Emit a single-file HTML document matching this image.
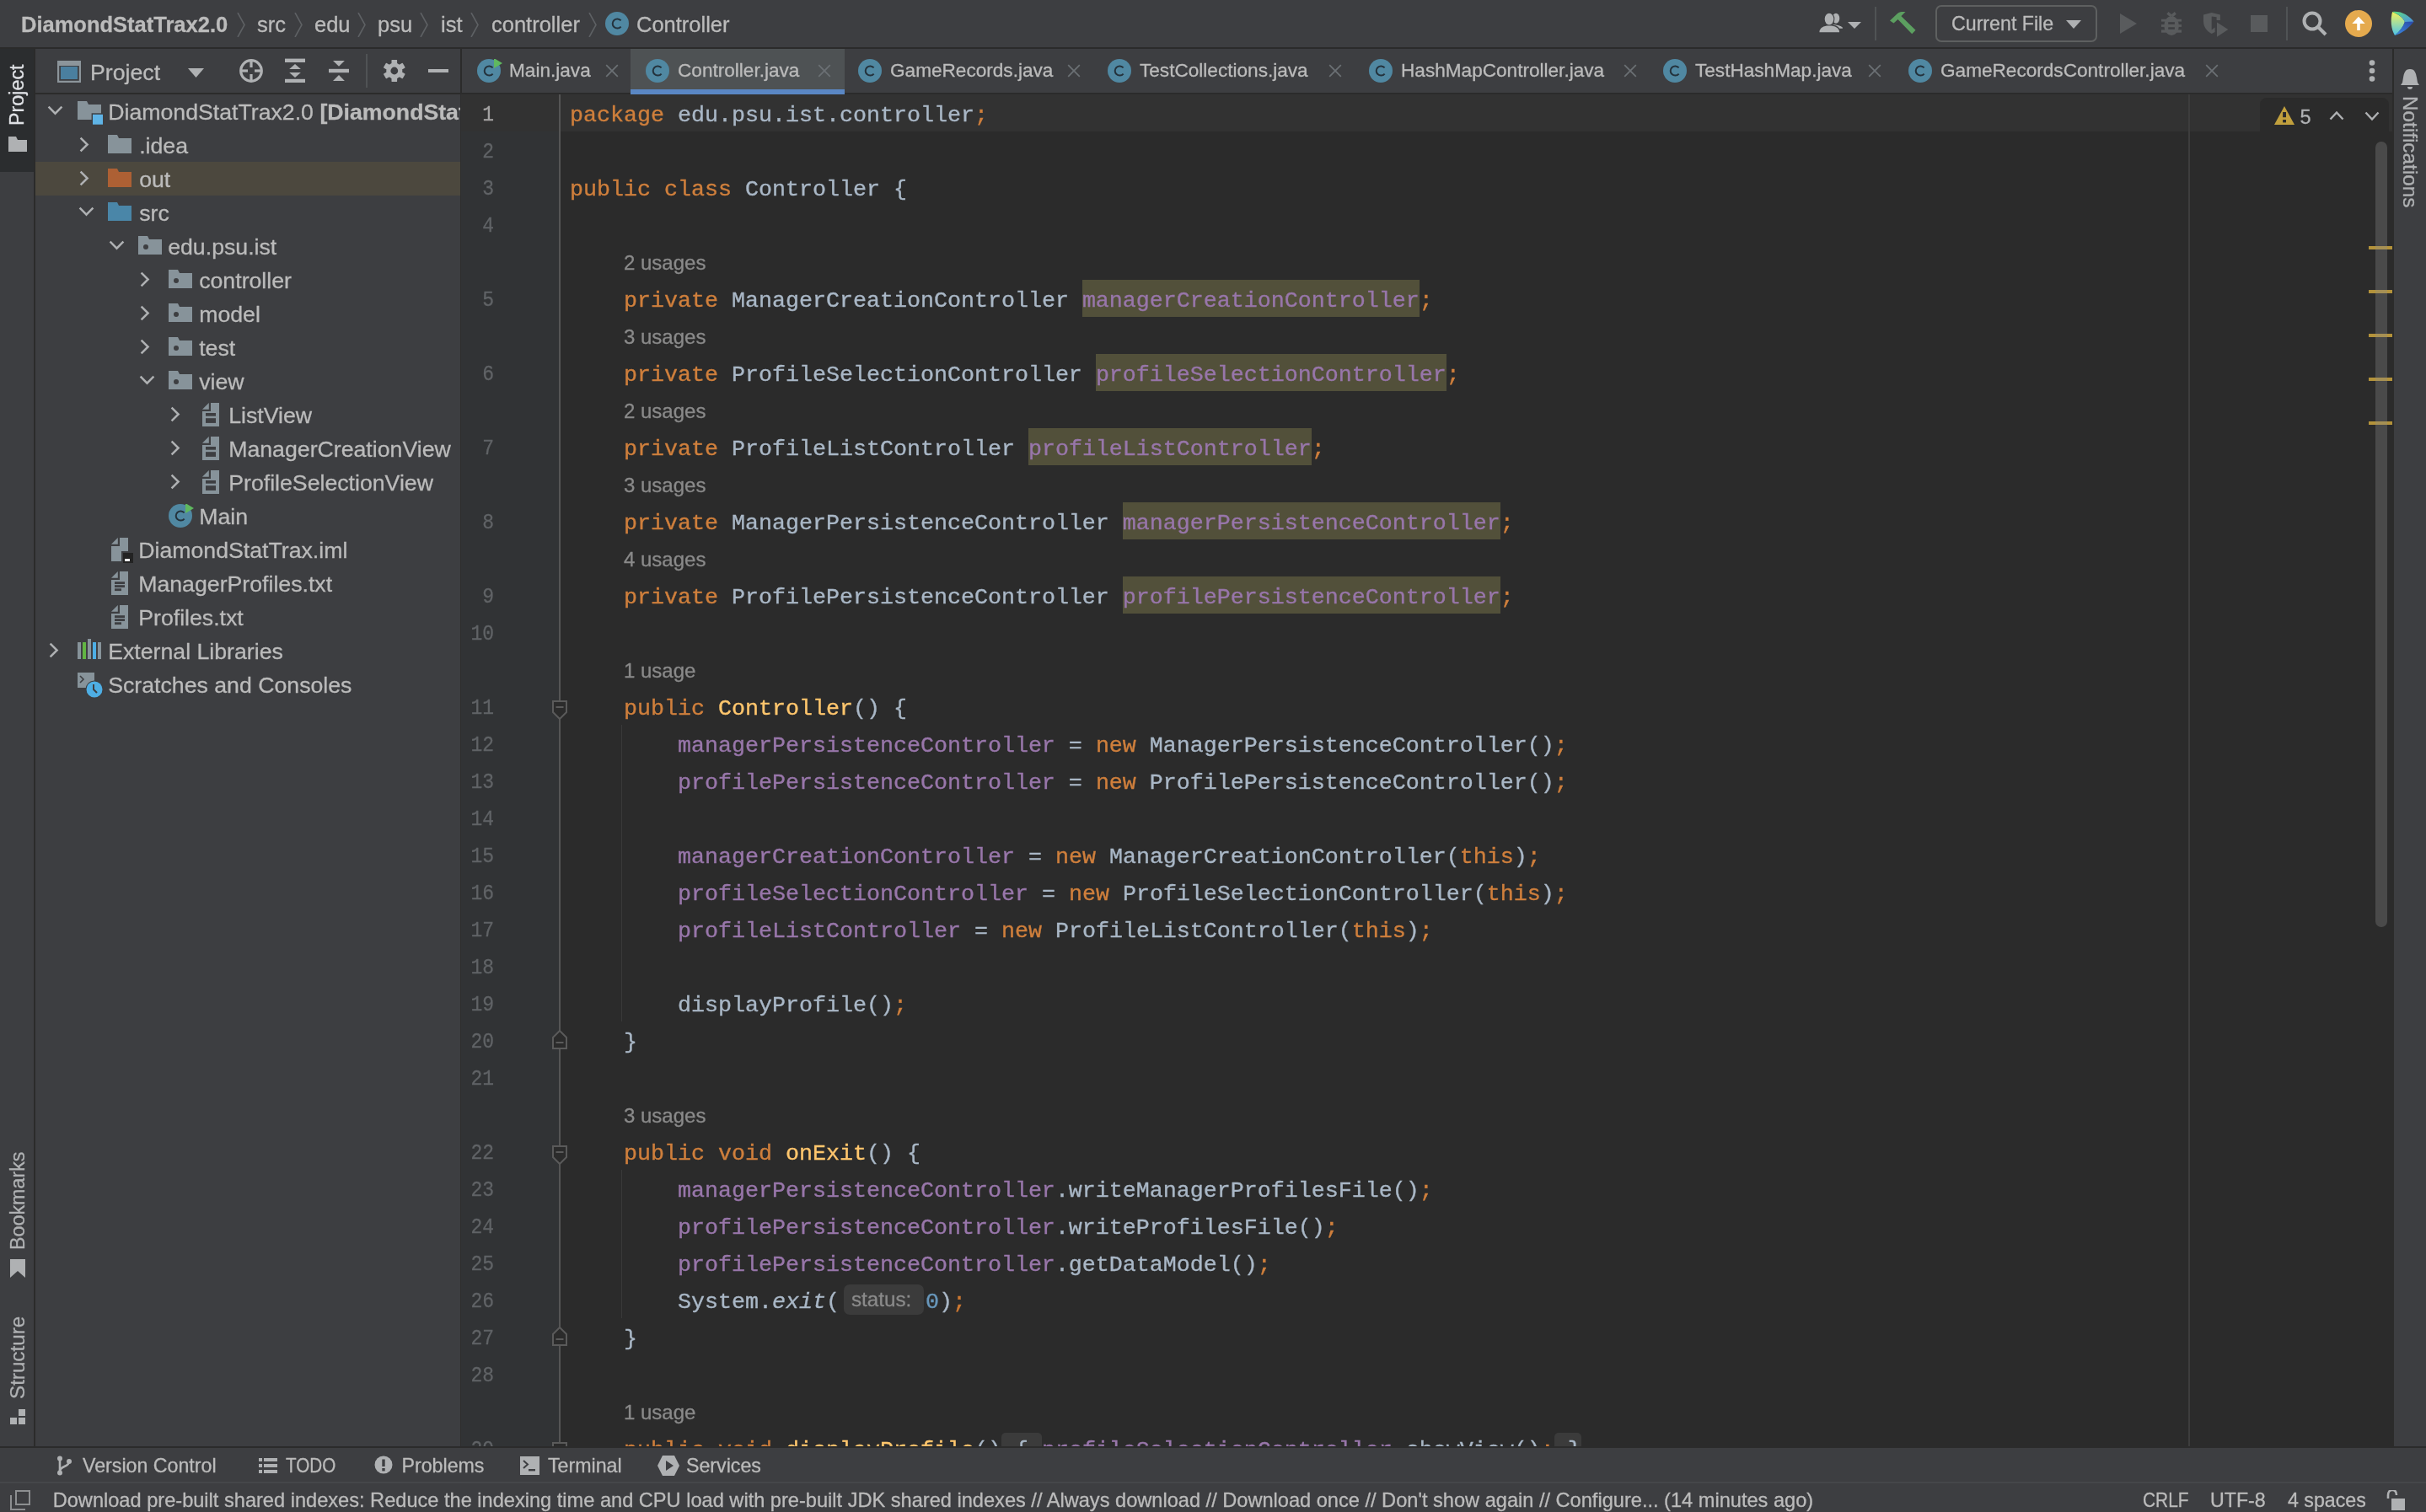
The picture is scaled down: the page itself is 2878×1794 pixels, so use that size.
<!DOCTYPE html>
<html><head><meta charset="utf-8"><title>IntelliJ</title>
<style>html,body{margin:0;padding:0;}body{width:2878px;height:1794px;position:relative;overflow:hidden;background:#3d3e41;font-family:'Liberation Sans', sans-serif;}svg{display:block}#root{position:absolute;left:0;top:0;width:2878px;height:1794px;will-change:transform}</style>
</head><body><div id="root">
<div style="position:absolute;left:0px;top:0px;width:2878px;height:1794px;background:#3d3e41;"></div>
<div style="position:absolute;left:0px;top:56px;width:2878px;height:2px;background:#2b2b2b;"></div>
<div style="position:absolute;left:40px;top:58px;width:2px;height:1658px;background:#2b2b2b;"></div>
<div style="position:absolute;left:0px;top:58px;width:40px;height:146px;background:#2b2d2f;"></div>
<div style="position:absolute;left:546px;top:58px;width:2px;height:54px;background:#2b2b2b;"></div>
<div style="position:absolute;left:546px;top:112px;width:1px;height:1604px;background:#2e2e2e;"></div>
<div style="position:absolute;left:42px;top:110px;width:504px;height:2px;background:#2b2b2b;"></div>
<div style="position:absolute;left:548px;top:110px;width:2290px;height:2px;background:#2b2b2b;"></div>
<div style="position:absolute;left:2838px;top:58px;width:2px;height:1658px;background:#2b2b2b;"></div>
<div style="position:absolute;left:0px;top:1716px;width:2878px;height:2px;background:#2b2b2b;"></div>
<div style="position:absolute;left:0px;top:1758px;width:2878px;height:1.6px;background:#45474a;"></div>
<div style="position:absolute;left:547px;top:112px;width:116px;height:1604px;background:#313335;"></div>
<div style="position:absolute;left:663px;top:112px;width:2px;height:1604px;background:#555555;"></div>
<div style="position:absolute;left:665px;top:112px;width:2173px;height:1604px;background:#2b2b2b;"></div>
<div style="position:absolute;left:547px;top:112px;width:116px;height:44px;background:#323232;"></div>
<div style="position:absolute;left:665px;top:112px;width:2173px;height:44px;background:#323232;"></div>
<div style="position:absolute;left:25px;top:17.01px;font:bold 25.5px/25.5px 'Liberation Sans', sans-serif;color:#bbbbbb;white-space:pre;-webkit-text-stroke:0.3px currentColor;">DiamondStatTrax2.0</div>
<svg style="position:absolute;left:281px;top:15px" width="10" height="29" viewBox="0 0 10 29"><polyline points="1,0 9,14.5 1,29" fill="none" stroke="#5e6164" stroke-width="1.6"/></svg>
<div style="position:absolute;left:305px;top:17.01px;font:normal 25.5px/25.5px 'Liberation Sans', sans-serif;color:#bbbbbb;white-space:pre;-webkit-text-stroke:0.3px currentColor;">src</div>
<svg style="position:absolute;left:349px;top:15px" width="10" height="29" viewBox="0 0 10 29"><polyline points="1,0 9,14.5 1,29" fill="none" stroke="#5e6164" stroke-width="1.6"/></svg>
<div style="position:absolute;left:373px;top:17.01px;font:normal 25.5px/25.5px 'Liberation Sans', sans-serif;color:#bbbbbb;white-space:pre;-webkit-text-stroke:0.3px currentColor;">edu</div>
<svg style="position:absolute;left:424px;top:15px" width="10" height="29" viewBox="0 0 10 29"><polyline points="1,0 9,14.5 1,29" fill="none" stroke="#5e6164" stroke-width="1.6"/></svg>
<div style="position:absolute;left:448px;top:17.01px;font:normal 25.5px/25.5px 'Liberation Sans', sans-serif;color:#bbbbbb;white-space:pre;-webkit-text-stroke:0.3px currentColor;">psu</div>
<svg style="position:absolute;left:498px;top:15px" width="10" height="29" viewBox="0 0 10 29"><polyline points="1,0 9,14.5 1,29" fill="none" stroke="#5e6164" stroke-width="1.6"/></svg>
<div style="position:absolute;left:523px;top:17.01px;font:normal 25.5px/25.5px 'Liberation Sans', sans-serif;color:#bbbbbb;white-space:pre;-webkit-text-stroke:0.3px currentColor;">ist</div>
<svg style="position:absolute;left:558px;top:15px" width="10" height="29" viewBox="0 0 10 29"><polyline points="1,0 9,14.5 1,29" fill="none" stroke="#5e6164" stroke-width="1.6"/></svg>
<div style="position:absolute;left:583px;top:17.01px;font:normal 25.5px/25.5px 'Liberation Sans', sans-serif;color:#bbbbbb;white-space:pre;-webkit-text-stroke:0.3px currentColor;">controller</div>
<svg style="position:absolute;left:698px;top:15px" width="10" height="29" viewBox="0 0 10 29"><polyline points="1,0 9,14.5 1,29" fill="none" stroke="#5e6164" stroke-width="1.6"/></svg>
<svg style="position:absolute;left:718px;top:14px" width="32" height="28" viewBox="0 0 32 28"><circle cx="14.0" cy="14.0" r="14.0" fill="#5088a2"/><path d="M18.6,10.4 A5.6,5.6 0 1 0 18.6,17.6" fill="none" stroke="#24323c" stroke-width="2"/></svg>
<div style="position:absolute;left:755px;top:17.01px;font:normal 25.5px/25.5px 'Liberation Sans', sans-serif;color:#bbbbbb;white-space:pre;-webkit-text-stroke:0.3px currentColor;">Controller</div>
<svg style="position:absolute;left:2157px;top:15px" width="30" height="25" viewBox="0 0 30 25"><ellipse cx="21" cy="6.8" rx="4.3" ry="6" fill="#afb1b3"/><path d="M16,14 C23,14.5 29,16 29,19 L29,18.4 L19,18.4 Z" fill="#afb1b3"/><path d="M17.5,14.2 C23,15 29,16.5 29,18.4 L20,18.4 Z" fill="#afb1b3"/><ellipse cx="13" cy="7.6" rx="5.6" ry="7.2" fill="#afb1b3" stroke="#3d3e41" stroke-width="1.6"/><path d="M0.5,24 C0.5,18 5.5,15.5 10,14.8 L16,14.8 C21,15.5 26,18 26,24 Z" fill="#afb1b3" stroke="#3d3e41" stroke-width="1.6"/><ellipse cx="13" cy="7.6" rx="5.3" ry="6.9" fill="#afb1b3"/></svg>
<svg style="position:absolute;left:2192px;top:26px" width="16" height="8" viewBox="0 0 16 8"><polygon points="0,0 16,0 8,8" fill="#afb1b3"/></svg>
<div style="position:absolute;left:2224px;top:8px;width:2px;height:40px;background:#505355;"></div>
<svg style="position:absolute;left:2242px;top:14px" width="31" height="28" viewBox="0 0 31 28"><path d="M0,10.5 L8.5,2.5 C10,1 12,0 14,0 L18.5,0 L13.5,5 L9.5,9 L4.5,13.5 Z" fill="#5c9f60"/><path d="M8.5,8 L12.5,4.2 L30.5,21.8 L26.2,26.2 Z" fill="#5c9f60"/></svg>
<div style="position:absolute;left:2296px;top:6px;width:188px;height:40px;border:2px solid #5e6060;border-radius:7px"></div>
<div style="position:absolute;left:2315px;top:17.36px;font:normal 23.2px/23.2px 'Liberation Sans', sans-serif;color:#bbbbbb;white-space:pre;-webkit-text-stroke:0.3px currentColor;">Current File</div>
<svg style="position:absolute;left:2451px;top:24px" width="18" height="10" viewBox="0 0 18 10"><polygon points="0,0 18,0 9,10" fill="#afb1b3"/></svg>
<svg style="position:absolute;left:2515px;top:16px" width="21" height="24" viewBox="0 0 21 24"><polygon points="0,0 20,12 0,24" fill="#595b5d"/></svg>
<svg style="position:absolute;left:2563px;top:14px" width="26" height="30" viewBox="0 0 26 30"><line x1="8.4" y1="1.4" x2="12.8" y2="5" stroke="#595b5d" stroke-width="3.4"/><line x1="17.8" y1="1.4" x2="13.4" y2="5" stroke="#595b5d" stroke-width="3.4"/><ellipse cx="13.1" cy="16.6" rx="8.8" ry="11.3" fill="#595b5d"/><rect x="1" y="8.7" width="24" height="2.9" fill="#595b5d"/><rect x="1" y="15.1" width="24" height="2.8" fill="#595b5d"/><rect x="1" y="21.4" width="24" height="3.3" fill="#595b5d"/><rect x="9.2" y="12.2" width="7.7" height="2.6" fill="#3d3e41"/><rect x="9.2" y="18.3" width="7.7" height="2.5" fill="#3d3e41"/></svg>
<svg style="position:absolute;left:2613px;top:15px" width="32" height="30" viewBox="0 0 32 30"><path d="M1,2.5 L10.7,0 L20.9,2.5 L20.9,9 L16.6,9 L16.6,5.3 L10.7,4.6 L10.7,20.4 L14.6,17.6 L14.6,23 L10.7,25 C5,22 1,17 1,10 Z" fill="#595b5d"/><path d="M17,11.4 L30.3,20 L17,28.8 Z" fill="#595b5d"/></svg>
<div style="position:absolute;left:2670px;top:18px;width:20px;height:20px;background:#595b5d;"></div>
<div style="position:absolute;left:2712px;top:8px;width:2px;height:40px;background:#505355;"></div>
<svg style="position:absolute;left:2731px;top:13px" width="30" height="30" viewBox="0 0 30 30"><circle cx="12" cy="12" r="9.5" fill="none" stroke="#afb1b3" stroke-width="4"/><line x1="19" y1="19" x2="28" y2="28" stroke="#afb1b3" stroke-width="4"/></svg>
<svg style="position:absolute;left:2782px;top:12px" width="32" height="32" viewBox="0 0 32 32"><circle cx="16" cy="16" r="16" fill="#e5aa4e"/><path d="M16,7.8 L23.7,16 L17.8,16 L17.8,24 L14.2,24 L14.2,16 L8.3,16Z" fill="#ffffff"/></svg>
<svg style="position:absolute;left:2835px;top:13px" width="30" height="30" viewBox="0 0 30 30"><defs><linearGradient id="lgA" x1="0" y1="0" x2="0" y2="1"><stop offset="0" stop-color="#f4f45a"/><stop offset="1" stop-color="#4cc4ea"/></linearGradient><linearGradient id="lgB" x1="0" y1="0" x2="1" y2="1"><stop offset="0" stop-color="#5ee07a"/><stop offset="1" stop-color="#4a8ee6"/></linearGradient><linearGradient id="lgC" x1="1" y1="0" x2="0" y2="1"><stop offset="0" stop-color="#2a48a8"/><stop offset="1" stop-color="#3d8ce0"/></linearGradient></defs><path d="M3.1,1 C10,4 16,8 17.9,13 C16,19 12,24 6,28.9 C1.5,22 0.5,10 3.1,1 Z" fill="url(#lgA)"/><path d="M3.1,1 C14,0 22,5 28.6,12.8 L17.9,13 C16,8 10,4 3.1,1 Z" fill="url(#lgB)"/><path d="M17.9,13 L28.6,12.8 C22,21 14,27 6,28.9 C12,24 16,19 17.9,13 Z" fill="url(#lgC)"/></svg>
<div style="position:absolute;left:8.876550000000002px;top:149px;transform-origin:0 0;transform:rotate(-90deg);font:23.3px/23.3px 'Liberation Sans', sans-serif;color:#dfe1e5;white-space:pre;-webkit-text-stroke:0.3px currentColor">Project</div>
<svg style="position:absolute;left:10px;top:162px" width="22" height="18" viewBox="0 0 22 18"><path d="M0,0 L9,0 L11,4 L22,4 L22,18 L0,18Z" fill="#afb1b3"/></svg>
<div style="position:absolute;left:9.97655px;top:1483px;transform-origin:0 0;transform:rotate(-90deg);font:23.3px/23.3px 'Liberation Sans', sans-serif;color:#afb1b3;white-space:pre;-webkit-text-stroke:0.3px currentColor">Bookmarks</div>
<svg style="position:absolute;left:12px;top:1494px" width="18" height="22" viewBox="0 0 18 22"><path d="M0,0 L18,0 L18,22 L9,14 L0,22Z" fill="#afb1b3"/></svg>
<div style="position:absolute;left:9.2147px;top:1660px;transform-origin:0 0;transform:rotate(-90deg);font:24.2px/24.2px 'Liberation Sans', sans-serif;color:#afb1b3;white-space:pre;-webkit-text-stroke:0.3px currentColor">Structure</div>
<svg style="position:absolute;left:12px;top:1672px" width="18" height="18" viewBox="0 0 18 18"><rect x="10" y="0" width="8" height="8" fill="#afb1b3"/><rect x="0" y="10" width="8" height="8" fill="#afb1b3"/><rect x="10" y="10" width="8" height="8" fill="#afb1b3"/></svg>
<svg style="position:absolute;left:2848px;top:82px" width="22" height="24" viewBox="0 0 22 24"><path d="M11,0 C5,0 4,5 3,10 L2,16 L0,19 L22,19 L20,16 L19,10 C18,5 17,0 11,0Z" fill="#afb1b3"/><path d="M8,21 L14,21 C14,23 13,24 11,24 C9,24 8,23 8,21Z" fill="#afb1b3"/></svg>
<div style="position:absolute;left:2871.26995px;top:114px;transform-origin:0 0;transform:rotate(90deg);font:24.3px/24.3px 'Liberation Sans', sans-serif;color:#afb1b3;white-space:pre;-webkit-text-stroke:0.3px currentColor">Notifications</div>
<svg style="position:absolute;left:68px;top:72px" width="28" height="26" viewBox="0 0 28 26"><rect x="1" y="1" width="26" height="24" fill="none" stroke="#8c959b" stroke-width="2.4"/><rect x="1" y="1" width="26" height="5" fill="#8c959b"/><rect x="4" y="7" width="20" height="15" fill="#4a7f9f"/></svg>
<div style="position:absolute;left:107px;top:72.70px;font:normal 26.7px/26.7px 'Liberation Sans', sans-serif;color:#bbbbbb;white-space:pre;-webkit-text-stroke:0.3px currentColor;">Project</div>
<svg style="position:absolute;left:223px;top:81px" width="19" height="11" viewBox="0 0 19 11"><polygon points="0,0 19,0 9.5,11" fill="#afb1b3"/></svg>
<svg style="position:absolute;left:284px;top:70px" width="28" height="28" viewBox="0 0 28 28"><circle cx="14" cy="14" r="12.3" fill="none" stroke="#afb1b3" stroke-width="3.2"/><rect x="12.4" y="1" width="3.2" height="9" fill="#afb1b3"/><rect x="12.4" y="18" width="3.2" height="9" fill="#afb1b3"/><rect x="1" y="12.4" width="9" height="3.2" fill="#afb1b3"/><rect x="18" y="12.4" width="9" height="3.2" fill="#afb1b3"/></svg>
<svg style="position:absolute;left:338px;top:69px" width="24" height="30" viewBox="0 0 24 30"><rect x="0" y="0.6" width="24" height="4.4" fill="#afb1b3"/><rect x="0" y="24.8" width="24" height="4.2" fill="#afb1b3"/><polygon points="12,6.9 18.9,13.1 5.2,13.1" fill="#afb1b3"/><polygon points="5.2,17 18.9,17 12,23.1" fill="#afb1b3"/></svg>
<svg style="position:absolute;left:390px;top:70px" width="24" height="28" viewBox="0 0 24 28"><rect x="0" y="11.8" width="24" height="4.4" fill="#afb1b3"/><polygon points="5,1.9 18.9,1.9 12,8.7" fill="#afb1b3"/><polygon points="12,18.9 18.9,26.1 5,26.1" fill="#afb1b3"/></svg>
<div style="position:absolute;left:434px;top:64px;width:2px;height:40px;background:#505355;"></div>
<svg style="position:absolute;left:455px;top:71px" width="26" height="26" viewBox="0 0 26 26"><g transform="translate(12.8,13)"><circle r="9.6" fill="#afb1b3"/><rect x="-3.3" y="-13.2" width="6.6" height="7" rx="1" fill="#afb1b3" transform="rotate(0)"/><rect x="-3.3" y="-13.2" width="6.6" height="7" rx="1" fill="#afb1b3" transform="rotate(60)"/><rect x="-3.3" y="-13.2" width="6.6" height="7" rx="1" fill="#afb1b3" transform="rotate(120)"/><rect x="-3.3" y="-13.2" width="6.6" height="7" rx="1" fill="#afb1b3" transform="rotate(180)"/><rect x="-3.3" y="-13.2" width="6.6" height="7" rx="1" fill="#afb1b3" transform="rotate(240)"/><rect x="-3.3" y="-13.2" width="6.6" height="7" rx="1" fill="#afb1b3" transform="rotate(300)"/><circle r="4.4" fill="#3d3e41"/></g></svg>
<div style="position:absolute;left:508px;top:82px;width:24px;height:4px;background:#afb1b3;"></div>
<div style="position:absolute;left:0;top:0;width:2878px;height:1794px;clip-path:inset(112px 2332px 78px 42px)">
<div style="position:absolute;left:42px;top:192px;width:504px;height:40px;background:#4c483e;"></div>
<svg style="position:absolute;left:56px;top:124.5px" width="19" height="12" viewBox="0 0 19 12"><polyline points="1.6,1.6 9.5,9.6 17.4,1.6" fill="none" stroke="#afb1b3" stroke-width="2.5"/></svg>
<svg style="position:absolute;left:92px;top:120px" width="31" height="28" viewBox="0 0 31 28"><path d="M0,0 L11,0 L13,4 L28,4 L28,22 L0,22Z" fill="#87939a"/><rect x="16.6" y="14.3" width="14.4" height="14" fill="#3d3e41"/><rect x="18" y="15.8" width="12" height="11.9" fill="#5fb4e6"/></svg>
<div style="position:absolute;left:128.2px;top:119.90px;font:26.7px/26.7px 'Liberation Sans', sans-serif;color:#bbbbbb;white-space:pre;-webkit-text-stroke:0.3px currentColor">DiamondStatTrax2.0 <b>[DiamondStatTrax]</b></div>
<svg style="position:absolute;left:94px;top:162px" width="12" height="19" viewBox="0 0 12 19"><polyline points="1.6,1.6 9.6,9.5 1.6,17.4" fill="none" stroke="#afb1b3" stroke-width="2.5"/></svg>
<svg style="position:absolute;left:128px;top:160px" width="28" height="22" viewBox="0 0 28 22"><path d="M0,0 L11,0 L13,4 L28,4 L28,22 L0,22Z" fill="#87939a"/></svg>
<div style="position:absolute;left:165.2px;top:159.90px;font:normal 26.7px/26.7px 'Liberation Sans', sans-serif;color:#bbbbbb;white-space:pre;-webkit-text-stroke:0.3px currentColor;">.idea</div>
<svg style="position:absolute;left:94px;top:202px" width="12" height="19" viewBox="0 0 12 19"><polyline points="1.6,1.6 9.6,9.5 1.6,17.4" fill="none" stroke="#afb1b3" stroke-width="2.5"/></svg>
<svg style="position:absolute;left:128px;top:200px" width="28" height="22" viewBox="0 0 28 22"><path d="M0,0 L11,0 L13,4 L28,4 L28,22 L0,22Z" fill="#ad6034"/></svg>
<div style="position:absolute;left:165.2px;top:199.90px;font:normal 26.7px/26.7px 'Liberation Sans', sans-serif;color:#bbbbbb;white-space:pre;-webkit-text-stroke:0.3px currentColor;">out</div>
<svg style="position:absolute;left:93px;top:244.5px" width="19" height="12" viewBox="0 0 19 12"><polyline points="1.6,1.6 9.5,9.6 17.4,1.6" fill="none" stroke="#afb1b3" stroke-width="2.5"/></svg>
<svg style="position:absolute;left:128px;top:240px" width="28" height="22" viewBox="0 0 28 22"><path d="M0,0 L11,0 L13,4 L28,4 L28,22 L0,22Z" fill="#4a86a8"/></svg>
<div style="position:absolute;left:165.2px;top:239.90px;font:normal 26.7px/26.7px 'Liberation Sans', sans-serif;color:#bbbbbb;white-space:pre;-webkit-text-stroke:0.3px currentColor;">src</div>
<svg style="position:absolute;left:129px;top:284.5px" width="19" height="12" viewBox="0 0 19 12"><polyline points="1.6,1.6 9.5,9.6 17.4,1.6" fill="none" stroke="#afb1b3" stroke-width="2.5"/></svg>
<svg style="position:absolute;left:164px;top:280px" width="28" height="22" viewBox="0 0 28 22"><path d="M0,0 L11,0 L13,4 L28,4 L28,22 L0,22Z" fill="#87939a"/><circle cx="9" cy="13" r="3" fill="#3d3e41"/></svg>
<div style="position:absolute;left:199.2px;top:279.90px;font:normal 26.7px/26.7px 'Liberation Sans', sans-serif;color:#bbbbbb;white-space:pre;-webkit-text-stroke:0.3px currentColor;">edu.psu.ist</div>
<svg style="position:absolute;left:166px;top:322px" width="12" height="19" viewBox="0 0 12 19"><polyline points="1.6,1.6 9.6,9.5 1.6,17.4" fill="none" stroke="#afb1b3" stroke-width="2.5"/></svg>
<svg style="position:absolute;left:200px;top:320px" width="28" height="22" viewBox="0 0 28 22"><path d="M0,0 L11,0 L13,4 L28,4 L28,22 L0,22Z" fill="#87939a"/><circle cx="9" cy="13" r="3" fill="#3d3e41"/></svg>
<div style="position:absolute;left:236.2px;top:319.90px;font:normal 26.7px/26.7px 'Liberation Sans', sans-serif;color:#bbbbbb;white-space:pre;-webkit-text-stroke:0.3px currentColor;">controller</div>
<svg style="position:absolute;left:166px;top:362px" width="12" height="19" viewBox="0 0 12 19"><polyline points="1.6,1.6 9.6,9.5 1.6,17.4" fill="none" stroke="#afb1b3" stroke-width="2.5"/></svg>
<svg style="position:absolute;left:200px;top:360px" width="28" height="22" viewBox="0 0 28 22"><path d="M0,0 L11,0 L13,4 L28,4 L28,22 L0,22Z" fill="#87939a"/><circle cx="9" cy="13" r="3" fill="#3d3e41"/></svg>
<div style="position:absolute;left:236.2px;top:359.90px;font:normal 26.7px/26.7px 'Liberation Sans', sans-serif;color:#bbbbbb;white-space:pre;-webkit-text-stroke:0.3px currentColor;">model</div>
<svg style="position:absolute;left:166px;top:402px" width="12" height="19" viewBox="0 0 12 19"><polyline points="1.6,1.6 9.6,9.5 1.6,17.4" fill="none" stroke="#afb1b3" stroke-width="2.5"/></svg>
<svg style="position:absolute;left:200px;top:400px" width="28" height="22" viewBox="0 0 28 22"><path d="M0,0 L11,0 L13,4 L28,4 L28,22 L0,22Z" fill="#87939a"/><circle cx="9" cy="13" r="3" fill="#3d3e41"/></svg>
<div style="position:absolute;left:236.2px;top:399.90px;font:normal 26.7px/26.7px 'Liberation Sans', sans-serif;color:#bbbbbb;white-space:pre;-webkit-text-stroke:0.3px currentColor;">test</div>
<svg style="position:absolute;left:165px;top:444.5px" width="19" height="12" viewBox="0 0 19 12"><polyline points="1.6,1.6 9.5,9.6 17.4,1.6" fill="none" stroke="#afb1b3" stroke-width="2.5"/></svg>
<svg style="position:absolute;left:200px;top:440px" width="28" height="22" viewBox="0 0 28 22"><path d="M0,0 L11,0 L13,4 L28,4 L28,22 L0,22Z" fill="#87939a"/><circle cx="9" cy="13" r="3" fill="#3d3e41"/></svg>
<div style="position:absolute;left:236.2px;top:439.90px;font:normal 26.7px/26.7px 'Liberation Sans', sans-serif;color:#bbbbbb;white-space:pre;-webkit-text-stroke:0.3px currentColor;">view</div>
<svg style="position:absolute;left:202px;top:482px" width="12" height="19" viewBox="0 0 12 19"><polyline points="1.6,1.6 9.6,9.5 1.6,17.4" fill="none" stroke="#afb1b3" stroke-width="2.5"/></svg>
<svg style="position:absolute;left:240px;top:478px" width="20" height="28" viewBox="0 0 20 28"><path d="M0,7.8 L7.8,0 L7.8,7.8Z" fill="#87939a"/><path d="M10,0 L20,0 L20,28 L0,28 L0,10 L10,10Z" fill="#87939a"/><rect x="4" y="12" width="12" height="3.7" fill="#3d3e41"/><rect x="4" y="18.2" width="12" height="5.7" fill="#3d3e41"/></svg>
<div style="position:absolute;left:271.2px;top:479.90px;font:normal 26.7px/26.7px 'Liberation Sans', sans-serif;color:#bbbbbb;white-space:pre;-webkit-text-stroke:0.3px currentColor;">ListView</div>
<svg style="position:absolute;left:202px;top:522px" width="12" height="19" viewBox="0 0 12 19"><polyline points="1.6,1.6 9.6,9.5 1.6,17.4" fill="none" stroke="#afb1b3" stroke-width="2.5"/></svg>
<svg style="position:absolute;left:240px;top:518px" width="20" height="28" viewBox="0 0 20 28"><path d="M0,7.8 L7.8,0 L7.8,7.8Z" fill="#87939a"/><path d="M10,0 L20,0 L20,28 L0,28 L0,10 L10,10Z" fill="#87939a"/><rect x="4" y="12" width="12" height="3.7" fill="#3d3e41"/><rect x="4" y="18.2" width="12" height="5.7" fill="#3d3e41"/></svg>
<div style="position:absolute;left:271.2px;top:519.90px;font:normal 26.7px/26.7px 'Liberation Sans', sans-serif;color:#bbbbbb;white-space:pre;-webkit-text-stroke:0.3px currentColor;">ManagerCreationView</div>
<svg style="position:absolute;left:202px;top:562px" width="12" height="19" viewBox="0 0 12 19"><polyline points="1.6,1.6 9.6,9.5 1.6,17.4" fill="none" stroke="#afb1b3" stroke-width="2.5"/></svg>
<svg style="position:absolute;left:240px;top:558px" width="20" height="28" viewBox="0 0 20 28"><path d="M0,7.8 L7.8,0 L7.8,7.8Z" fill="#87939a"/><path d="M10,0 L20,0 L20,28 L0,28 L0,10 L10,10Z" fill="#87939a"/><rect x="4" y="12" width="12" height="3.7" fill="#3d3e41"/><rect x="4" y="18.2" width="12" height="5.7" fill="#3d3e41"/></svg>
<div style="position:absolute;left:271.2px;top:559.90px;font:normal 26.7px/26.7px 'Liberation Sans', sans-serif;color:#bbbbbb;white-space:pre;-webkit-text-stroke:0.3px currentColor;">ProfileSelectionView</div>
<svg style="position:absolute;left:200px;top:598px" width="32" height="28" viewBox="0 0 32 28"><circle cx="14.0" cy="14.0" r="14.0" fill="#5088a2"/><path d="M18.6,10.4 A5.6,5.6 0 1 0 18.6,17.6" fill="none" stroke="#24323c" stroke-width="2"/><polygon points="20,-1 30,5 20,11" fill="#5fb85f"/></svg>
<div style="position:absolute;left:236.2px;top:599.90px;font:normal 26.7px/26.7px 'Liberation Sans', sans-serif;color:#bbbbbb;white-space:pre;-webkit-text-stroke:0.3px currentColor;">Main</div>
<svg style="position:absolute;left:132px;top:638px" width="28" height="30" viewBox="0 0 28 30"><path d="M0,7.8 L7.8,0 L7.8,7.8Z" fill="#87939a"/><path d="M10,0 L20,0 L20,28 L0,28 L0,10 L10,10Z" fill="#87939a"/><rect x="12" y="16" width="16" height="14" fill="#3d3e41"/><rect x="14" y="18" width="12" height="12" fill="#232323"/><rect x="16" y="25" width="6" height="3" fill="#eeeeee"/></svg>
<div style="position:absolute;left:164.2px;top:639.90px;font:normal 26.7px/26.7px 'Liberation Sans', sans-serif;color:#bbbbbb;white-space:pre;-webkit-text-stroke:0.3px currentColor;">DiamondStatTrax.iml</div>
<svg style="position:absolute;left:132px;top:678px" width="28" height="30" viewBox="0 0 28 30"><path d="M0,7.8 L7.8,0 L7.8,7.8Z" fill="#87939a"/><path d="M10,0 L20,0 L20,28 L0,28 L0,10 L10,10Z" fill="#87939a"/><rect x="4" y="12.2" width="12" height="2.8" fill="#3d3e41"/><rect x="4" y="16.2" width="12" height="2.8" fill="#3d3e41"/><rect x="4" y="20.3" width="8" height="2.8" fill="#3d3e41"/></svg>
<div style="position:absolute;left:164.2px;top:679.90px;font:normal 26.7px/26.7px 'Liberation Sans', sans-serif;color:#bbbbbb;white-space:pre;-webkit-text-stroke:0.3px currentColor;">ManagerProfiles.txt</div>
<svg style="position:absolute;left:132px;top:718px" width="28" height="30" viewBox="0 0 28 30"><path d="M0,7.8 L7.8,0 L7.8,7.8Z" fill="#87939a"/><path d="M10,0 L20,0 L20,28 L0,28 L0,10 L10,10Z" fill="#87939a"/><rect x="4" y="12.2" width="12" height="2.8" fill="#3d3e41"/><rect x="4" y="16.2" width="12" height="2.8" fill="#3d3e41"/><rect x="4" y="20.3" width="8" height="2.8" fill="#3d3e41"/></svg>
<div style="position:absolute;left:164.2px;top:719.90px;font:normal 26.7px/26.7px 'Liberation Sans', sans-serif;color:#bbbbbb;white-space:pre;-webkit-text-stroke:0.3px currentColor;">Profiles.txt</div>
<svg style="position:absolute;left:58px;top:762px" width="12" height="19" viewBox="0 0 12 19"><polyline points="1.6,1.6 9.6,9.5 1.6,17.4" fill="none" stroke="#afb1b3" stroke-width="2.5"/></svg>
<svg style="position:absolute;left:92px;top:758px" width="28" height="24" viewBox="0 0 28 24"><rect x="0" y="4" width="4" height="20" fill="#87939a"/><rect x="6" y="4" width="4" height="20" fill="#62b543"/><rect x="12" y="0" width="4" height="24" fill="#87939a"/><rect x="18" y="4" width="4" height="20" fill="#4eaee4"/><rect x="24" y="4" width="4" height="20" fill="#87939a"/></svg>
<div style="position:absolute;left:128.2px;top:759.90px;font:normal 26.7px/26.7px 'Liberation Sans', sans-serif;color:#bbbbbb;white-space:pre;-webkit-text-stroke:0.3px currentColor;">External Libraries</div>
<svg style="position:absolute;left:92px;top:798px" width="31" height="31" viewBox="0 0 31 31"><rect x="0" y="0" width="20" height="18" fill="#87939a"/><polyline points="3,4 7,8 3,12" fill="none" stroke="#3d3e41" stroke-width="1.6"/><circle cx="20" cy="20" r="10.5" fill="#3d3e41"/><circle cx="20" cy="20" r="9.5" fill="#4eaee4"/><polyline points="19,14 19,20 23,24" fill="none" stroke="#3d3e41" stroke-width="2"/></svg>
<div style="position:absolute;left:128.2px;top:799.90px;font:normal 26.7px/26.7px 'Liberation Sans', sans-serif;color:#bbbbbb;white-space:pre;-webkit-text-stroke:0.3px currentColor;">Scratches and Consoles</div>
</div>
<div style="position:absolute;left:748px;top:58px;width:254px;height:48px;background:#4e5254;"></div>
<div style="position:absolute;left:748px;top:106px;width:254px;height:6px;background:#5a87c4;"></div>
<svg style="position:absolute;left:566px;top:70px" width="32" height="28" viewBox="0 0 32 28"><circle cx="14.0" cy="14.0" r="14.0" fill="#5088a2"/><path d="M18.6,10.4 A5.6,5.6 0 1 0 18.6,17.6" fill="none" stroke="#24323c" stroke-width="2"/><polygon points="20,-1 30,5 20,11" fill="#5fb85f"/></svg>
<div style="position:absolute;left:604px;top:73.07px;font:normal 22.6px/22.6px 'Liberation Sans', sans-serif;color:#bbbbbb;white-space:pre;-webkit-text-stroke:0.3px currentColor;">Main.java</div>
<svg style="position:absolute;left:718px;top:76px" width="16" height="16" viewBox="0 0 16 16"><line x1="1.2" y1="1.2" x2="14.8" y2="14.8" stroke="#6b7074" stroke-width="1.8"/><line x1="14.8" y1="1.2" x2="1.2" y2="14.8" stroke="#6b7074" stroke-width="1.8"/></svg>
<svg style="position:absolute;left:766px;top:70px" width="32" height="28" viewBox="0 0 32 28"><circle cx="14.0" cy="14.0" r="14.0" fill="#5088a2"/><path d="M18.6,10.4 A5.6,5.6 0 1 0 18.6,17.6" fill="none" stroke="#24323c" stroke-width="2"/></svg>
<div style="position:absolute;left:804px;top:73.07px;font:normal 22.6px/22.6px 'Liberation Sans', sans-serif;color:#bbbbbb;white-space:pre;-webkit-text-stroke:0.3px currentColor;">Controller.java</div>
<svg style="position:absolute;left:970px;top:76px" width="16" height="16" viewBox="0 0 16 16"><line x1="1.2" y1="1.2" x2="14.8" y2="14.8" stroke="#6b7074" stroke-width="1.8"/><line x1="14.8" y1="1.2" x2="1.2" y2="14.8" stroke="#6b7074" stroke-width="1.8"/></svg>
<svg style="position:absolute;left:1018px;top:70px" width="32" height="28" viewBox="0 0 32 28"><circle cx="14.0" cy="14.0" r="14.0" fill="#5088a2"/><path d="M18.6,10.4 A5.6,5.6 0 1 0 18.6,17.6" fill="none" stroke="#24323c" stroke-width="2"/></svg>
<div style="position:absolute;left:1056px;top:73.07px;font:normal 22.6px/22.6px 'Liberation Sans', sans-serif;color:#bbbbbb;white-space:pre;-webkit-text-stroke:0.3px currentColor;">GameRecords.java</div>
<svg style="position:absolute;left:1265.5px;top:76px" width="16" height="16" viewBox="0 0 16 16"><line x1="1.2" y1="1.2" x2="14.8" y2="14.8" stroke="#6b7074" stroke-width="1.8"/><line x1="14.8" y1="1.2" x2="1.2" y2="14.8" stroke="#6b7074" stroke-width="1.8"/></svg>
<svg style="position:absolute;left:1314px;top:70px" width="32" height="28" viewBox="0 0 32 28"><circle cx="14.0" cy="14.0" r="14.0" fill="#5088a2"/><path d="M18.6,10.4 A5.6,5.6 0 1 0 18.6,17.6" fill="none" stroke="#24323c" stroke-width="2"/></svg>
<div style="position:absolute;left:1352px;top:73.07px;font:normal 22.6px/22.6px 'Liberation Sans', sans-serif;color:#bbbbbb;white-space:pre;-webkit-text-stroke:0.3px currentColor;">TestCollections.java</div>
<svg style="position:absolute;left:1576px;top:76px" width="16" height="16" viewBox="0 0 16 16"><line x1="1.2" y1="1.2" x2="14.8" y2="14.8" stroke="#6b7074" stroke-width="1.8"/><line x1="14.8" y1="1.2" x2="1.2" y2="14.8" stroke="#6b7074" stroke-width="1.8"/></svg>
<svg style="position:absolute;left:1624px;top:70px" width="32" height="28" viewBox="0 0 32 28"><circle cx="14.0" cy="14.0" r="14.0" fill="#5088a2"/><path d="M18.6,10.4 A5.6,5.6 0 1 0 18.6,17.6" fill="none" stroke="#24323c" stroke-width="2"/></svg>
<div style="position:absolute;left:1662px;top:73.07px;font:normal 22.6px/22.6px 'Liberation Sans', sans-serif;color:#bbbbbb;white-space:pre;-webkit-text-stroke:0.3px currentColor;">HashMapController.java</div>
<svg style="position:absolute;left:1926px;top:76px" width="16" height="16" viewBox="0 0 16 16"><line x1="1.2" y1="1.2" x2="14.8" y2="14.8" stroke="#6b7074" stroke-width="1.8"/><line x1="14.8" y1="1.2" x2="1.2" y2="14.8" stroke="#6b7074" stroke-width="1.8"/></svg>
<svg style="position:absolute;left:1973px;top:70px" width="32" height="28" viewBox="0 0 32 28"><circle cx="14.0" cy="14.0" r="14.0" fill="#5088a2"/><path d="M18.6,10.4 A5.6,5.6 0 1 0 18.6,17.6" fill="none" stroke="#24323c" stroke-width="2"/></svg>
<div style="position:absolute;left:2011px;top:73.07px;font:normal 22.6px/22.6px 'Liberation Sans', sans-serif;color:#bbbbbb;white-space:pre;-webkit-text-stroke:0.3px currentColor;">TestHashMap.java</div>
<svg style="position:absolute;left:2216px;top:76px" width="16" height="16" viewBox="0 0 16 16"><line x1="1.2" y1="1.2" x2="14.8" y2="14.8" stroke="#6b7074" stroke-width="1.8"/><line x1="14.8" y1="1.2" x2="1.2" y2="14.8" stroke="#6b7074" stroke-width="1.8"/></svg>
<svg style="position:absolute;left:2264px;top:70px" width="32" height="28" viewBox="0 0 32 28"><circle cx="14.0" cy="14.0" r="14.0" fill="#5088a2"/><path d="M18.6,10.4 A5.6,5.6 0 1 0 18.6,17.6" fill="none" stroke="#24323c" stroke-width="2"/></svg>
<div style="position:absolute;left:2302px;top:73.07px;font:normal 22.6px/22.6px 'Liberation Sans', sans-serif;color:#bbbbbb;white-space:pre;-webkit-text-stroke:0.3px currentColor;">GameRecordsController.java</div>
<svg style="position:absolute;left:2616px;top:76px" width="16" height="16" viewBox="0 0 16 16"><line x1="1.2" y1="1.2" x2="14.8" y2="14.8" stroke="#6b7074" stroke-width="1.8"/><line x1="14.8" y1="1.2" x2="1.2" y2="14.8" stroke="#6b7074" stroke-width="1.8"/></svg>
<svg style="position:absolute;left:2810px;top:71px" width="8" height="26" viewBox="0 0 8 26"><circle cx="4" cy="3.5" r="3.3" fill="#afb1b3"/><circle cx="4" cy="13" r="3.3" fill="#afb1b3"/><circle cx="4" cy="22.5" r="3.3" fill="#afb1b3"/></svg>
<div style="position:absolute;left:0;top:0;width:2878px;height:1794px;clip-path:inset(112px 40px 78px 548px)">
<div style="position:absolute;left:2596px;top:112px;width:2px;height:1604px;background:#3d3d3d;"></div>
<div style="position:absolute;left:1284.0px;top:332px;width:400.0px;height:44px;background:#52503a;"></div>
<div style="position:absolute;left:1300.0px;top:420px;width:416.0px;height:44px;background:#52503a;"></div>
<div style="position:absolute;left:1220.0px;top:508px;width:336.0px;height:44px;background:#52503a;"></div>
<div style="position:absolute;left:1332.0px;top:596px;width:448.0px;height:44px;background:#52503a;"></div>
<div style="position:absolute;left:1332.0px;top:684px;width:448.0px;height:44px;background:#52503a;"></div>
<div style="position:absolute;left:736.5px;top:860px;width:1.5px;height:352px;background:#393939;"></div>
<div style="position:absolute;left:736.5px;top:1388px;width:1.5px;height:176px;background:#393939;"></div>
<div style="position:absolute;left:676px;top:123.76px;font:26.67px/26.67px 'Liberation Mono', monospace;white-space:pre;-webkit-text-stroke:0.35px currentColor"><span style="color:#cf7f3c">package</span><span style="color:#a9b7c6"> edu.psu.ist.controller</span><span style="color:#cf7f3c">;</span></div>
<div style="position:absolute;left:676px;top:211.76px;font:26.67px/26.67px 'Liberation Mono', monospace;white-space:pre;-webkit-text-stroke:0.35px currentColor"><span style="color:#cf7f3c">public class</span><span style="color:#a9b7c6"> Controller {</span></div>
<div style="position:absolute;left:740.0px;top:299.88px;font:normal 24px/24px 'Liberation Sans', sans-serif;color:#8a8a8a;white-space:pre;-webkit-text-stroke:0.3px currentColor;">2 usages</div>
<div style="position:absolute;left:676px;top:343.76px;font:26.67px/26.67px 'Liberation Mono', monospace;white-space:pre;-webkit-text-stroke:0.35px currentColor"><span style="color:#cf7f3c">    private</span><span style="color:#a9b7c6"> ManagerCreationController </span><span style="color:#9876aa">managerCreationController</span><span style="color:#cf7f3c">;</span></div>
<div style="position:absolute;left:740.0px;top:387.88px;font:normal 24px/24px 'Liberation Sans', sans-serif;color:#8a8a8a;white-space:pre;-webkit-text-stroke:0.3px currentColor;">3 usages</div>
<div style="position:absolute;left:676px;top:431.76px;font:26.67px/26.67px 'Liberation Mono', monospace;white-space:pre;-webkit-text-stroke:0.35px currentColor"><span style="color:#cf7f3c">    private</span><span style="color:#a9b7c6"> ProfileSelectionController </span><span style="color:#9876aa">profileSelectionController</span><span style="color:#cf7f3c">;</span></div>
<div style="position:absolute;left:740.0px;top:475.88px;font:normal 24px/24px 'Liberation Sans', sans-serif;color:#8a8a8a;white-space:pre;-webkit-text-stroke:0.3px currentColor;">2 usages</div>
<div style="position:absolute;left:676px;top:519.76px;font:26.67px/26.67px 'Liberation Mono', monospace;white-space:pre;-webkit-text-stroke:0.35px currentColor"><span style="color:#cf7f3c">    private</span><span style="color:#a9b7c6"> ProfileListController </span><span style="color:#9876aa">profileListController</span><span style="color:#cf7f3c">;</span></div>
<div style="position:absolute;left:740.0px;top:563.88px;font:normal 24px/24px 'Liberation Sans', sans-serif;color:#8a8a8a;white-space:pre;-webkit-text-stroke:0.3px currentColor;">3 usages</div>
<div style="position:absolute;left:676px;top:607.76px;font:26.67px/26.67px 'Liberation Mono', monospace;white-space:pre;-webkit-text-stroke:0.35px currentColor"><span style="color:#cf7f3c">    private</span><span style="color:#a9b7c6"> ManagerPersistenceController </span><span style="color:#9876aa">managerPersistenceController</span><span style="color:#cf7f3c">;</span></div>
<div style="position:absolute;left:740.0px;top:651.88px;font:normal 24px/24px 'Liberation Sans', sans-serif;color:#8a8a8a;white-space:pre;-webkit-text-stroke:0.3px currentColor;">4 usages</div>
<div style="position:absolute;left:676px;top:695.76px;font:26.67px/26.67px 'Liberation Mono', monospace;white-space:pre;-webkit-text-stroke:0.35px currentColor"><span style="color:#cf7f3c">    private</span><span style="color:#a9b7c6"> ProfilePersistenceController </span><span style="color:#9876aa">profilePersistenceController</span><span style="color:#cf7f3c">;</span></div>
<div style="position:absolute;left:740.0px;top:783.88px;font:normal 24px/24px 'Liberation Sans', sans-serif;color:#8a8a8a;white-space:pre;-webkit-text-stroke:0.3px currentColor;">1 usage</div>
<div style="position:absolute;left:676px;top:827.76px;font:26.67px/26.67px 'Liberation Mono', monospace;white-space:pre;-webkit-text-stroke:0.35px currentColor"><span style="color:#cf7f3c">    public</span><span style="color:#a9b7c6"> </span><span style="color:#ffc66d">Controller</span><span style="color:#a9b7c6">() {</span></div>
<div style="position:absolute;left:676px;top:871.76px;font:26.67px/26.67px 'Liberation Mono', monospace;white-space:pre;-webkit-text-stroke:0.35px currentColor"><span style="color:#9876aa">        managerPersistenceController</span><span style="color:#a9b7c6"> = </span><span style="color:#cf7f3c">new</span><span style="color:#a9b7c6"> ManagerPersistenceController()</span><span style="color:#cf7f3c">;</span></div>
<div style="position:absolute;left:676px;top:915.76px;font:26.67px/26.67px 'Liberation Mono', monospace;white-space:pre;-webkit-text-stroke:0.35px currentColor"><span style="color:#9876aa">        profilePersistenceController</span><span style="color:#a9b7c6"> = </span><span style="color:#cf7f3c">new</span><span style="color:#a9b7c6"> ProfilePersistenceController()</span><span style="color:#cf7f3c">;</span></div>
<div style="position:absolute;left:676px;top:1003.76px;font:26.67px/26.67px 'Liberation Mono', monospace;white-space:pre;-webkit-text-stroke:0.35px currentColor"><span style="color:#9876aa">        managerCreationController</span><span style="color:#a9b7c6"> = </span><span style="color:#cf7f3c">new</span><span style="color:#a9b7c6"> ManagerCreationController(</span><span style="color:#cf7f3c">this</span><span style="color:#a9b7c6">)</span><span style="color:#cf7f3c">;</span></div>
<div style="position:absolute;left:676px;top:1047.76px;font:26.67px/26.67px 'Liberation Mono', monospace;white-space:pre;-webkit-text-stroke:0.35px currentColor"><span style="color:#9876aa">        profileSelectionController</span><span style="color:#a9b7c6"> = </span><span style="color:#cf7f3c">new</span><span style="color:#a9b7c6"> ProfileSelectionController(</span><span style="color:#cf7f3c">this</span><span style="color:#a9b7c6">)</span><span style="color:#cf7f3c">;</span></div>
<div style="position:absolute;left:676px;top:1091.76px;font:26.67px/26.67px 'Liberation Mono', monospace;white-space:pre;-webkit-text-stroke:0.35px currentColor"><span style="color:#9876aa">        profileListController</span><span style="color:#a9b7c6"> = </span><span style="color:#cf7f3c">new</span><span style="color:#a9b7c6"> ProfileListController(</span><span style="color:#cf7f3c">this</span><span style="color:#a9b7c6">)</span><span style="color:#cf7f3c">;</span></div>
<div style="position:absolute;left:676px;top:1179.76px;font:26.67px/26.67px 'Liberation Mono', monospace;white-space:pre;-webkit-text-stroke:0.35px currentColor"><span style="color:#a9b7c6">        displayProfile()</span><span style="color:#cf7f3c">;</span></div>
<div style="position:absolute;left:676px;top:1223.76px;font:26.67px/26.67px 'Liberation Mono', monospace;white-space:pre;-webkit-text-stroke:0.35px currentColor"><span style="color:#a9b7c6">    }</span></div>
<div style="position:absolute;left:740.0px;top:1311.88px;font:normal 24px/24px 'Liberation Sans', sans-serif;color:#8a8a8a;white-space:pre;-webkit-text-stroke:0.3px currentColor;">3 usages</div>
<div style="position:absolute;left:676px;top:1355.76px;font:26.67px/26.67px 'Liberation Mono', monospace;white-space:pre;-webkit-text-stroke:0.35px currentColor"><span style="color:#cf7f3c">    public void</span><span style="color:#a9b7c6"> </span><span style="color:#ffc66d">onExit</span><span style="color:#a9b7c6">() {</span></div>
<div style="position:absolute;left:676px;top:1399.76px;font:26.67px/26.67px 'Liberation Mono', monospace;white-space:pre;-webkit-text-stroke:0.35px currentColor"><span style="color:#9876aa">        managerPersistenceController</span><span style="color:#a9b7c6">.writeManagerProfilesFile()</span><span style="color:#cf7f3c">;</span></div>
<div style="position:absolute;left:676px;top:1443.76px;font:26.67px/26.67px 'Liberation Mono', monospace;white-space:pre;-webkit-text-stroke:0.35px currentColor"><span style="color:#9876aa">        profilePersistenceController</span><span style="color:#a9b7c6">.writeProfilesFile()</span><span style="color:#cf7f3c">;</span></div>
<div style="position:absolute;left:676px;top:1487.76px;font:26.67px/26.67px 'Liberation Mono', monospace;white-space:pre;-webkit-text-stroke:0.35px currentColor"><span style="color:#9876aa">        profilePersistenceController</span><span style="color:#a9b7c6">.getDataModel()</span><span style="color:#cf7f3c">;</span></div>
<div style="position:absolute;left:676px;top:1531.76px;font:26.67px/26.67px 'Liberation Mono', monospace;white-space:pre;-webkit-text-stroke:0.35px currentColor"><span style="color:#a9b7c6">        System.</span><span style="color:#a9b7c6;font-style:italic">exit</span><span style="color:#a9b7c6">(</span></div>
<div style="position:absolute;left:1000.5px;top:1524px;width:95px;height:36px;background:#3b3b3b;border-radius:7px"></div>
<div style="position:absolute;left:1010px;top:1530.21px;font:normal 24.2px/24.2px 'Liberation Sans', sans-serif;color:#8a8a8a;white-space:pre;-webkit-text-stroke:0.3px currentColor;">status:</div>
<div style="position:absolute;left:1098px;top:1531.76px;font:26.67px/26.67px 'Liberation Mono', monospace;white-space:pre;-webkit-text-stroke:0.35px currentColor"><span style="color:#6897bb">0</span><span style="color:#a9b7c6">)</span><span style="color:#cc7832">;</span></div>
<div style="position:absolute;left:676px;top:1575.76px;font:26.67px/26.67px 'Liberation Mono', monospace;white-space:pre;-webkit-text-stroke:0.35px currentColor"><span style="color:#a9b7c6">    }</span></div>
<div style="position:absolute;left:740.0px;top:1663.88px;font:normal 24px/24px 'Liberation Sans', sans-serif;color:#8a8a8a;white-space:pre;-webkit-text-stroke:0.3px currentColor;">1 usage</div>
<div style="position:absolute;left:1188.0px;top:1700px;width:48.0px;height:36px;background:#3b3b3b;border-radius:5px"></div>
<div style="position:absolute;left:1844.0px;top:1700px;width:32.0px;height:36px;background:#3b3b3b;border-radius:5px"></div>
<div style="position:absolute;left:676px;top:1707.76px;font:26.67px/26.67px 'Liberation Mono', monospace;white-space:pre;-webkit-text-stroke:0.35px currentColor"><span style="color:#cf7f3c">    public void</span><span style="color:#a9b7c6"> </span><span style="color:#ffc66d">displayProfile</span><span style="color:#a9b7c6">() { </span><span style="color:#9876aa">profileSelectionController</span><span style="color:#a9b7c6">.showView()</span><span style="color:#cf7f3c">;</span><span style="color:#a9b7c6"> }</span></div>
<div style="position:absolute;left:500px;width:86px;text-align:right;transform:scaleX(0.9);transform-origin:86px 0;top:124.45px;font:25.5px/25.5px 'Liberation Mono', monospace;color:#a4a3a3;white-space:pre;-webkit-text-stroke:0.3px currentColor">1</div>
<div style="position:absolute;left:500px;width:86px;text-align:right;transform:scaleX(0.9);transform-origin:86px 0;top:168.45px;font:25.5px/25.5px 'Liberation Mono', monospace;color:#606366;white-space:pre;-webkit-text-stroke:0.3px currentColor">2</div>
<div style="position:absolute;left:500px;width:86px;text-align:right;transform:scaleX(0.9);transform-origin:86px 0;top:212.45px;font:25.5px/25.5px 'Liberation Mono', monospace;color:#606366;white-space:pre;-webkit-text-stroke:0.3px currentColor">3</div>
<div style="position:absolute;left:500px;width:86px;text-align:right;transform:scaleX(0.9);transform-origin:86px 0;top:256.45px;font:25.5px/25.5px 'Liberation Mono', monospace;color:#606366;white-space:pre;-webkit-text-stroke:0.3px currentColor">4</div>
<div style="position:absolute;left:500px;width:86px;text-align:right;transform:scaleX(0.9);transform-origin:86px 0;top:344.45px;font:25.5px/25.5px 'Liberation Mono', monospace;color:#606366;white-space:pre;-webkit-text-stroke:0.3px currentColor">5</div>
<div style="position:absolute;left:500px;width:86px;text-align:right;transform:scaleX(0.9);transform-origin:86px 0;top:432.45px;font:25.5px/25.5px 'Liberation Mono', monospace;color:#606366;white-space:pre;-webkit-text-stroke:0.3px currentColor">6</div>
<div style="position:absolute;left:500px;width:86px;text-align:right;transform:scaleX(0.9);transform-origin:86px 0;top:520.45px;font:25.5px/25.5px 'Liberation Mono', monospace;color:#606366;white-space:pre;-webkit-text-stroke:0.3px currentColor">7</div>
<div style="position:absolute;left:500px;width:86px;text-align:right;transform:scaleX(0.9);transform-origin:86px 0;top:608.45px;font:25.5px/25.5px 'Liberation Mono', monospace;color:#606366;white-space:pre;-webkit-text-stroke:0.3px currentColor">8</div>
<div style="position:absolute;left:500px;width:86px;text-align:right;transform:scaleX(0.9);transform-origin:86px 0;top:696.45px;font:25.5px/25.5px 'Liberation Mono', monospace;color:#606366;white-space:pre;-webkit-text-stroke:0.3px currentColor">9</div>
<div style="position:absolute;left:500px;width:86px;text-align:right;transform:scaleX(0.9);transform-origin:86px 0;top:740.45px;font:25.5px/25.5px 'Liberation Mono', monospace;color:#606366;white-space:pre;-webkit-text-stroke:0.3px currentColor">10</div>
<div style="position:absolute;left:500px;width:86px;text-align:right;transform:scaleX(0.9);transform-origin:86px 0;top:828.45px;font:25.5px/25.5px 'Liberation Mono', monospace;color:#606366;white-space:pre;-webkit-text-stroke:0.3px currentColor">11</div>
<div style="position:absolute;left:500px;width:86px;text-align:right;transform:scaleX(0.9);transform-origin:86px 0;top:872.45px;font:25.5px/25.5px 'Liberation Mono', monospace;color:#606366;white-space:pre;-webkit-text-stroke:0.3px currentColor">12</div>
<div style="position:absolute;left:500px;width:86px;text-align:right;transform:scaleX(0.9);transform-origin:86px 0;top:916.45px;font:25.5px/25.5px 'Liberation Mono', monospace;color:#606366;white-space:pre;-webkit-text-stroke:0.3px currentColor">13</div>
<div style="position:absolute;left:500px;width:86px;text-align:right;transform:scaleX(0.9);transform-origin:86px 0;top:960.45px;font:25.5px/25.5px 'Liberation Mono', monospace;color:#606366;white-space:pre;-webkit-text-stroke:0.3px currentColor">14</div>
<div style="position:absolute;left:500px;width:86px;text-align:right;transform:scaleX(0.9);transform-origin:86px 0;top:1004.45px;font:25.5px/25.5px 'Liberation Mono', monospace;color:#606366;white-space:pre;-webkit-text-stroke:0.3px currentColor">15</div>
<div style="position:absolute;left:500px;width:86px;text-align:right;transform:scaleX(0.9);transform-origin:86px 0;top:1048.45px;font:25.5px/25.5px 'Liberation Mono', monospace;color:#606366;white-space:pre;-webkit-text-stroke:0.3px currentColor">16</div>
<div style="position:absolute;left:500px;width:86px;text-align:right;transform:scaleX(0.9);transform-origin:86px 0;top:1092.45px;font:25.5px/25.5px 'Liberation Mono', monospace;color:#606366;white-space:pre;-webkit-text-stroke:0.3px currentColor">17</div>
<div style="position:absolute;left:500px;width:86px;text-align:right;transform:scaleX(0.9);transform-origin:86px 0;top:1136.45px;font:25.5px/25.5px 'Liberation Mono', monospace;color:#606366;white-space:pre;-webkit-text-stroke:0.3px currentColor">18</div>
<div style="position:absolute;left:500px;width:86px;text-align:right;transform:scaleX(0.9);transform-origin:86px 0;top:1180.45px;font:25.5px/25.5px 'Liberation Mono', monospace;color:#606366;white-space:pre;-webkit-text-stroke:0.3px currentColor">19</div>
<div style="position:absolute;left:500px;width:86px;text-align:right;transform:scaleX(0.9);transform-origin:86px 0;top:1224.45px;font:25.5px/25.5px 'Liberation Mono', monospace;color:#606366;white-space:pre;-webkit-text-stroke:0.3px currentColor">20</div>
<div style="position:absolute;left:500px;width:86px;text-align:right;transform:scaleX(0.9);transform-origin:86px 0;top:1268.45px;font:25.5px/25.5px 'Liberation Mono', monospace;color:#606366;white-space:pre;-webkit-text-stroke:0.3px currentColor">21</div>
<div style="position:absolute;left:500px;width:86px;text-align:right;transform:scaleX(0.9);transform-origin:86px 0;top:1356.45px;font:25.5px/25.5px 'Liberation Mono', monospace;color:#606366;white-space:pre;-webkit-text-stroke:0.3px currentColor">22</div>
<div style="position:absolute;left:500px;width:86px;text-align:right;transform:scaleX(0.9);transform-origin:86px 0;top:1400.45px;font:25.5px/25.5px 'Liberation Mono', monospace;color:#606366;white-space:pre;-webkit-text-stroke:0.3px currentColor">23</div>
<div style="position:absolute;left:500px;width:86px;text-align:right;transform:scaleX(0.9);transform-origin:86px 0;top:1444.45px;font:25.5px/25.5px 'Liberation Mono', monospace;color:#606366;white-space:pre;-webkit-text-stroke:0.3px currentColor">24</div>
<div style="position:absolute;left:500px;width:86px;text-align:right;transform:scaleX(0.9);transform-origin:86px 0;top:1488.45px;font:25.5px/25.5px 'Liberation Mono', monospace;color:#606366;white-space:pre;-webkit-text-stroke:0.3px currentColor">25</div>
<div style="position:absolute;left:500px;width:86px;text-align:right;transform:scaleX(0.9);transform-origin:86px 0;top:1532.45px;font:25.5px/25.5px 'Liberation Mono', monospace;color:#606366;white-space:pre;-webkit-text-stroke:0.3px currentColor">26</div>
<div style="position:absolute;left:500px;width:86px;text-align:right;transform:scaleX(0.9);transform-origin:86px 0;top:1576.45px;font:25.5px/25.5px 'Liberation Mono', monospace;color:#606366;white-space:pre;-webkit-text-stroke:0.3px currentColor">27</div>
<div style="position:absolute;left:500px;width:86px;text-align:right;transform:scaleX(0.9);transform-origin:86px 0;top:1620.45px;font:25.5px/25.5px 'Liberation Mono', monospace;color:#606366;white-space:pre;-webkit-text-stroke:0.3px currentColor">28</div>
<div style="position:absolute;left:500px;width:86px;text-align:right;transform:scaleX(0.9);transform-origin:86px 0;top:1708.45px;font:25.5px/25.5px 'Liberation Mono', monospace;color:#606366;white-space:pre;-webkit-text-stroke:0.3px currentColor">29</div>
<svg style="position:absolute;left:655px;top:831px" width="18" height="23" viewBox="0 0 18 23"><path d="M1,1 L17,1 L17,14 L9,22 L1,14Z" fill="#2b2b2b" stroke="#5a5a5a" stroke-width="2"/><line x1="4.5" y1="8" x2="13.5" y2="8" stroke="#5a5a5a" stroke-width="2"/></svg>
<svg style="position:absolute;left:655px;top:1222px" width="18" height="23" viewBox="0 0 18 23"><path d="M1,22 L17,22 L17,9 L9,1 L1,9Z" fill="#2b2b2b" stroke="#5a5a5a" stroke-width="2"/><line x1="4.5" y1="15" x2="13.5" y2="15" stroke="#5a5a5a" stroke-width="2"/></svg>
<svg style="position:absolute;left:655px;top:1359px" width="18" height="23" viewBox="0 0 18 23"><path d="M1,1 L17,1 L17,14 L9,22 L1,14Z" fill="#2b2b2b" stroke="#5a5a5a" stroke-width="2"/><line x1="4.5" y1="8" x2="13.5" y2="8" stroke="#5a5a5a" stroke-width="2"/></svg>
<svg style="position:absolute;left:655px;top:1574px" width="18" height="23" viewBox="0 0 18 23"><path d="M1,22 L17,22 L17,9 L9,1 L1,9Z" fill="#2b2b2b" stroke="#5a5a5a" stroke-width="2"/><line x1="4.5" y1="15" x2="13.5" y2="15" stroke="#5a5a5a" stroke-width="2"/></svg>
<svg style="position:absolute;left:655px;top:1711px" width="18" height="23" viewBox="0 0 18 23"><path d="M1,1 L17,1 L17,14 L9,22 L1,14Z" fill="#2b2b2b" stroke="#5a5a5a" stroke-width="2"/><line x1="4.5" y1="8" x2="13.5" y2="8" stroke="#5a5a5a" stroke-width="2"/></svg>
<div style="position:absolute;left:2681px;top:116px;width:153px;height:40px;background:#2b2b2b;border-radius:8px 8px 0 0"></div>
<svg style="position:absolute;left:2698px;top:126px" width="24" height="22" viewBox="0 0 24 22"><path d="M12,0 L24,22 L0,22Z" fill="#c1a03d"/><rect x="10.1" y="7" width="3.9" height="6.2" fill="#2b2b2b"/><rect x="10.1" y="16" width="3.9" height="3.4" fill="#2b2b2b"/></svg>
<div style="position:absolute;left:2728.5px;top:128.11px;font:normal 23.5px/23.5px 'Liberation Sans', sans-serif;color:#afb1b3;white-space:pre;-webkit-text-stroke:0.3px currentColor;">5</div>
<svg style="position:absolute;left:2763px;top:131px" width="18" height="12" viewBox="0 0 18 12"><polyline points="1.5,10.5 9,2.5 16.5,10.5" fill="none" stroke="#afb1b3" stroke-width="2.4"/></svg>
<svg style="position:absolute;left:2805px;top:132px" width="18" height="12" viewBox="0 0 18 12"><polyline points="1.5,1.5 9,9.5 16.5,1.5" fill="none" stroke="#afb1b3" stroke-width="2.4"/></svg>
<div style="position:absolute;left:2810px;top:291.8px;width:28px;height:4px;background:#b3923a;"></div>
<div style="position:absolute;left:2810px;top:343.8px;width:28px;height:4px;background:#b3923a;"></div>
<div style="position:absolute;left:2810px;top:395.6px;width:28px;height:4px;background:#b3923a;"></div>
<div style="position:absolute;left:2810px;top:447.7px;width:28px;height:4px;background:#b3923a;"></div>
<div style="position:absolute;left:2810px;top:499.8px;width:28px;height:4px;background:#b3923a;"></div>
<div style="position:absolute;left:2818px;top:168px;width:14px;height:932px;background:rgba(140,140,140,0.33);border-radius:7px"></div>
</div>
<svg style="position:absolute;left:67px;top:1727px" width="19" height="24" viewBox="0 0 19 24"><circle cx="4" cy="3.5" r="3" fill="#afb1b3"/><circle cx="4" cy="20.5" r="3" fill="#afb1b3"/><circle cx="15" cy="7" r="3" fill="#afb1b3"/><line x1="4" y1="3.5" x2="4" y2="20.5" stroke="#afb1b3" stroke-width="2.6"/><path d="M15,7 C15,14 5,12 4,18" fill="none" stroke="#afb1b3" stroke-width="2.6"/></svg>
<div style="position:absolute;left:98px;top:1727.66px;font:normal 23.2px/23.2px 'Liberation Sans', sans-serif;color:#bbbbbb;white-space:pre;-webkit-text-stroke:0.3px currentColor;">Version Control</div>
<svg style="position:absolute;left:307px;top:1729px" width="22" height="20" viewBox="0 0 22 20"><rect x="0" y="1" width="4" height="4" fill="#afb1b3"/><rect x="6" y="1" width="16" height="4" fill="#afb1b3"/><rect x="0" y="8" width="4" height="4" fill="#afb1b3"/><rect x="6" y="8" width="16" height="4" fill="#afb1b3"/><rect x="0" y="15" width="4" height="4" fill="#afb1b3"/><rect x="6" y="15" width="16" height="4" fill="#afb1b3"/></svg>
<div style="position:absolute;left:339px;top:1727.66px;font:normal 23.2px/23.2px 'Liberation Sans', sans-serif;color:#bbbbbb;white-space:pre;-webkit-text-stroke:0.3px currentColor;transform:scaleX(0.89);transform-origin:0 0;">TODO</div>
<svg style="position:absolute;left:444px;top:1727px" width="22" height="22" viewBox="0 0 22 22"><circle cx="11" cy="11" r="10.5" fill="#afb1b3"/><rect x="9.3" y="4.5" width="3.4" height="8.5" fill="#3d3e41"/><rect x="9.3" y="15" width="3.4" height="3.4" fill="#3d3e41"/></svg>
<div style="position:absolute;left:476.5px;top:1727.66px;font:normal 23.2px/23.2px 'Liberation Sans', sans-serif;color:#bbbbbb;white-space:pre;-webkit-text-stroke:0.3px currentColor;">Problems</div>
<svg style="position:absolute;left:617px;top:1728px" width="23" height="22" viewBox="0 0 23 22"><rect x="0" y="0" width="23" height="22" fill="#afb1b3"/><polyline points="4,5 9,9.5 4,14" fill="none" stroke="#3d3e41" stroke-width="2"/><rect x="10" y="15" width="8" height="2.4" fill="#3d3e41"/></svg>
<div style="position:absolute;left:650px;top:1727.66px;font:normal 23.2px/23.2px 'Liberation Sans', sans-serif;color:#bbbbbb;white-space:pre;-webkit-text-stroke:0.3px currentColor;">Terminal</div>
<svg style="position:absolute;left:780px;top:1727px" width="26" height="24" viewBox="0 0 26 24"><polygon points="6,0 20,0 26,12 20,24 6,24 0,12" fill="#afb1b3"/><polygon points="10,6 19,12 10,18" fill="#3d3e41"/></svg>
<div style="position:absolute;left:814px;top:1727.66px;font:normal 23.2px/23.2px 'Liberation Sans', sans-serif;color:#bbbbbb;white-space:pre;-webkit-text-stroke:0.3px currentColor;">Services</div>
<svg style="position:absolute;left:12px;top:1768px" width="24" height="24" viewBox="0 0 24 24"><rect x="7" y="1" width="16" height="16" fill="none" stroke="#8c8e90" stroke-width="2"/><polyline points="1,6 1,23 18,23" fill="none" stroke="#8c8e90" stroke-width="2"/></svg>
<div style="position:absolute;left:62.7px;top:1769.02px;font:normal 23.6px/23.6px 'Liberation Sans', sans-serif;color:#bbbbbb;white-space:pre;-webkit-text-stroke:0.3px currentColor;">Download pre-built shared indexes: Reduce the indexing time and CPU load with pre-built JDK shared indexes // Always download // Download once // Don't show again // Configure... (14 minutes ago)</div>
<div style="position:absolute;left:2542px;top:1769.36px;font:normal 23.2px/23.2px 'Liberation Sans', sans-serif;color:#bbbbbb;white-space:pre;-webkit-text-stroke:0.3px currentColor;transform:scaleX(0.9);transform-origin:0 0;">CRLF</div>
<div style="position:absolute;left:2622px;top:1769.36px;font:normal 23.2px/23.2px 'Liberation Sans', sans-serif;color:#bbbbbb;white-space:pre;-webkit-text-stroke:0.3px currentColor;">UTF-8</div>
<div style="position:absolute;left:2714px;top:1769.36px;font:normal 23.2px/23.2px 'Liberation Sans', sans-serif;color:#bbbbbb;white-space:pre;-webkit-text-stroke:0.3px currentColor;">4 spaces</div>
<svg style="position:absolute;left:2830px;top:1768px" width="23" height="24" viewBox="0 0 23 24"><path d="M3,10 L3,6 C3,2 5,0 8,0 C11,0 13,2 13,6" fill="none" stroke="#afb1b3" stroke-width="2.6"/><rect x="7" y="10" width="16" height="14" fill="#afb1b3"/></svg>
</div></body></html>
